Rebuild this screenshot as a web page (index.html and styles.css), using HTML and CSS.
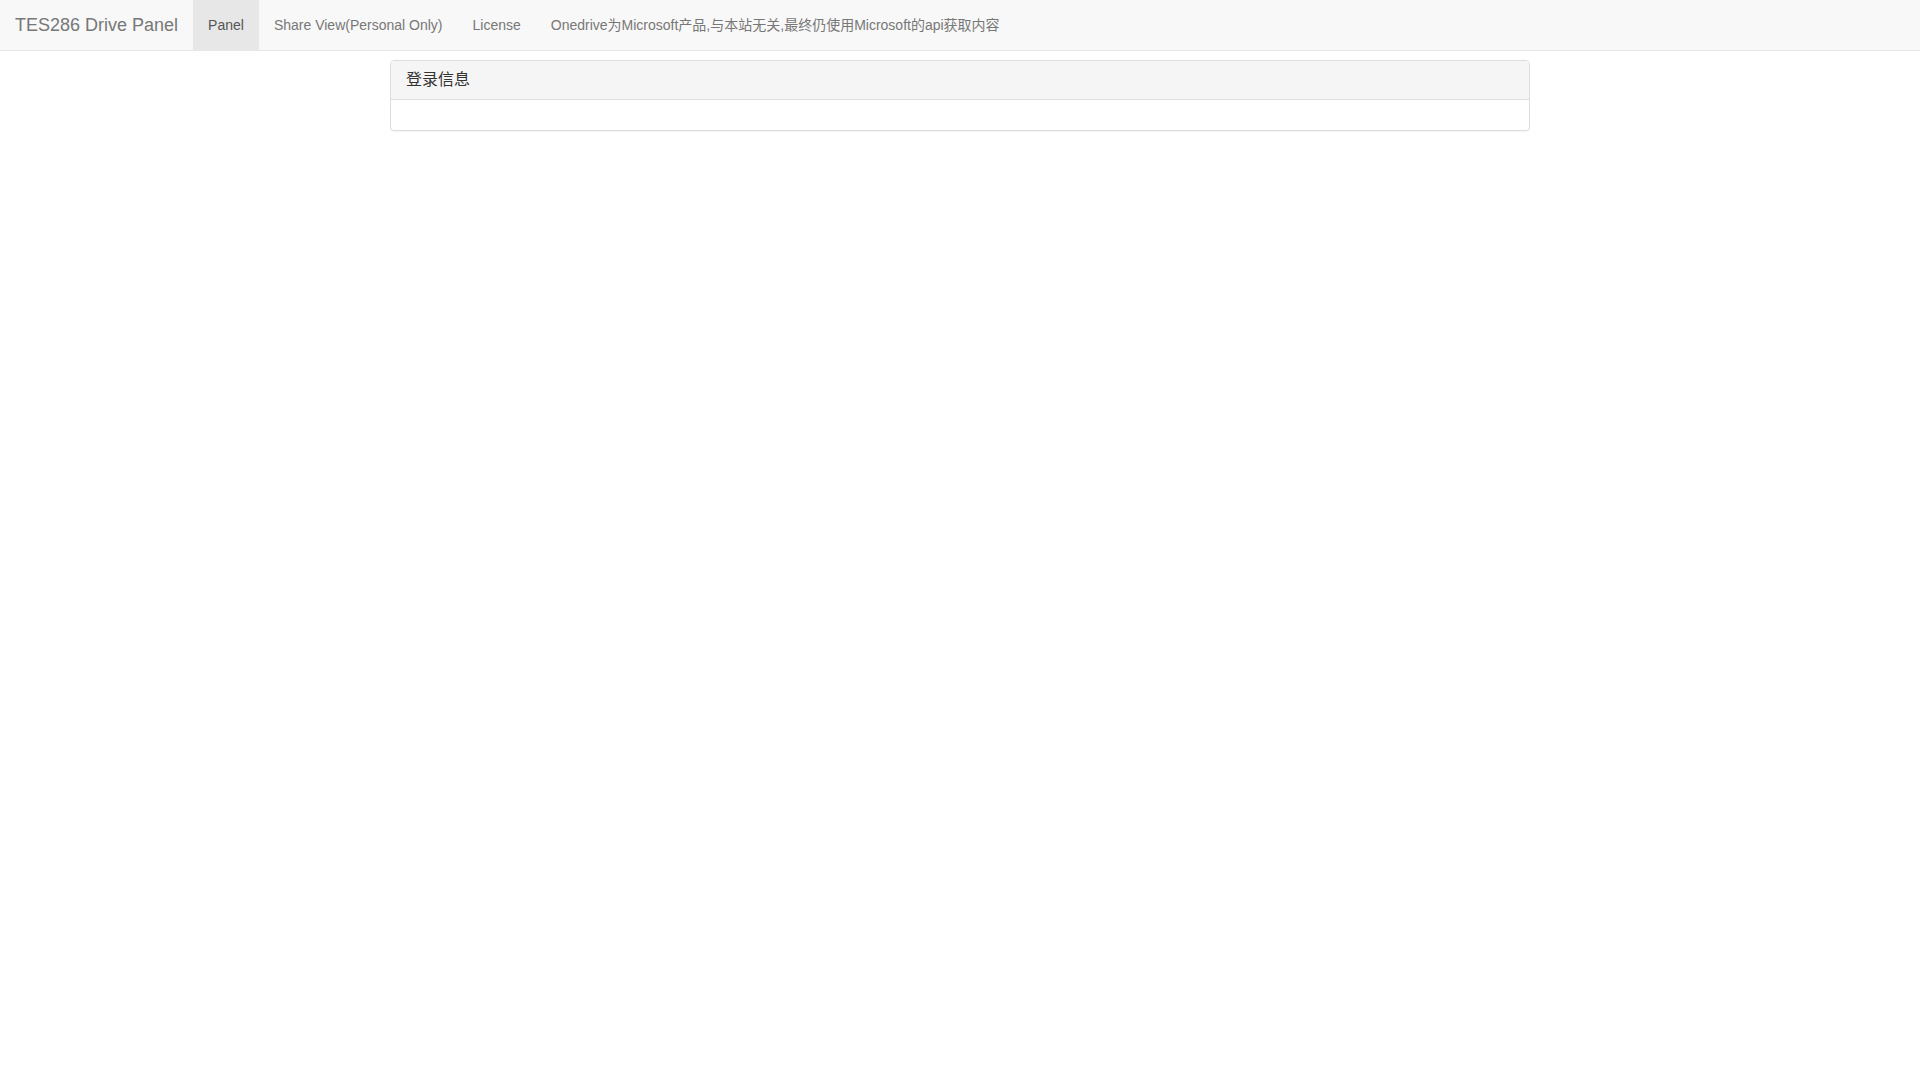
FILE: index.html
```html
<!DOCTYPE html>
<html lang="zh-CN">
<head>
    <meta charset="UTF-8">
    <meta name="viewport" content="width=device-width, initial-scale=1.0">
    <title>TES286 Drive Panel</title>
    <link rel="stylesheet" href="styles.css">
</head>
<body>
    <nav class="navbar">
        <a class="navbar-brand" href="#">TES286 Drive Panel</a>
        <ul class="navbar-nav">
            <li class="active"><a href="#">Panel</a></li>
            <li><a href="#">Share View(Personal Only)</a></li>
            <li><a href="#">License</a></li>
        </ul>
        <p class="navbar-text">Onedrive为Microsoft产品,与本站无关,最终仍使用Microsoft的api获取内容</p>
    </nav>

    <main class="container">
        <div class="panel">
            <div class="panel-heading">
                <h3 class="panel-title">登录信息</h3>
            </div>
            <div class="panel-body"></div>
        </div>
    </main>
</body>
</html>
```

FILE: styles.css
```css
* {
    box-sizing: border-box;
}
body {
    margin: 0;
    font-family: "Liberation Sans", "Noto Sans CJK SC", sans-serif;
    font-size: 14px;
    line-height: 20px;
    color: #333;
    background: #fff;
}

/* Top navigation */
.navbar {
    display: flex;
    min-height: 51px;
    background: #f8f8f8;
    border-bottom: 1px solid #e7e7e7;
}
.navbar a {
    display: block;
    padding: 15px;
    color: #777;
    text-decoration: none;
}
.navbar .navbar-brand {
    font-size: 18px;
}
.navbar-nav {
    display: flex;
    margin: 0;
    padding: 0;
    list-style: none;
}
.navbar-nav a:hover {
    color: #333;
}
.navbar .active a {
    color: #555;
    background: #e7e7e7;
}
.navbar-text {
    margin: 15px;
    color: #777;
}

/* Login panel */
.container {
    width: 60%;
    margin: 0 auto;
    padding: 9px 6px;
}
.panel {
    background: #fff;
    border: 1px solid #ddd;
    border-radius: 4px;
    box-shadow: 0 1px 1px rgba(0, 0, 0, 0.05);
}
.panel-heading {
    padding: 10px 15px;
    background: #f5f5f5;
    border-bottom: 1px solid #ddd;
    border-radius: 3px 3px 0 0;
}
.panel-title {
    margin: 0;
    font-size: 16px;
    font-weight: 400;
    line-height: 18px;
}
.panel-body {
    padding: 15px;
}
```
